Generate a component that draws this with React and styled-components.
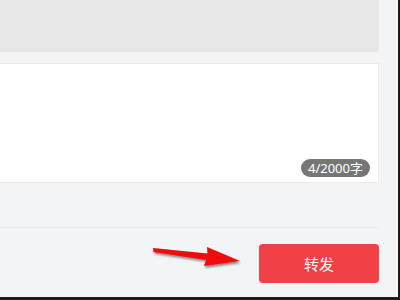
import React from 'react'
import styled, { createGlobalStyle } from 'styled-components'

const Global = createGlobalStyle`
  html, body {
    margin: 0;
    padding: 0;
    background: #1f1b1b;
    font-family: "Noto Sans", "Noto Sans CJK SC", sans-serif;
  }
`

const Dialog = styled.div`
  position: relative;
  width: 398px;
  height: 297px;
  background: #f3f4f6;
  overflow: hidden;
  box-sizing: border-box;
  border-right: 1px solid #fafafa;
`

const Column = styled.div`
  width: 379px;
  display: flex;
  flex-direction: column;
`

const Quote = styled.div`
  height: 52px;
  background: #e7e7e7;
  border-bottom-right-radius: 3px;
`

const Editor = styled.div`
  position: relative;
  margin-top: 11px;
  height: 118px;
  background: #fff;
  border: 1px solid #ebebeb;
  border-left: none;
`

const Counter = styled.span`
  position: absolute;
  right: 8px;
  bottom: 5px;
  height: 18px;
  line-height: 18px;
  padding: 0 7px;
  border-radius: 9px;
  background: #767676;
  color: #fff;
  font-size: 13px;
`

const Footer = styled.div`
  margin-top: 44px;
  border-top: 1px solid #e6e7e9;
  padding-top: 16px;
  display: flex;
  justify-content: flex-end;
`

const SendButton = styled.button`
  width: 120px;
  height: 39px;
  border: none;
  border-radius: 4px;
  background: #ef4146;
  color: #fff;
  font-family: "Noto Sans CJK SC", sans-serif;
  font-size: 15px;
  cursor: pointer;
`

const Arrow = styled.svg`
  position: absolute;
  left: 148px;
  top: 240px;
  overflow: visible;
`

export default function App() {
  return (
    <>
      <Global />
      <Dialog>
        <Column>
          <Quote />
          <Editor>
            <Counter>4/2000字</Counter>
          </Editor>
          <Footer>
            <SendButton>转发</SendButton>
          </Footer>
        </Column>
        <Arrow width="100" height="36" viewBox="0 0 100 36">
          <defs>
            <filter id="sh" x="-20%" y="-40%" width="140%" height="180%">
              <feDropShadow dx="1" dy="2" stdDeviation="1.2" floodColor="#000" floodOpacity="0.45" />
            </filter>
          </defs>
          <path
            d="M5 8 L5.5 12 L58 20 L56 26 L92 21 L59 7 L59.5 13.5 Z"
            fill="#ee0a0a"
            filter="url(#sh)"
          />
        </Arrow>
      </Dialog>
    </>
  )
}
